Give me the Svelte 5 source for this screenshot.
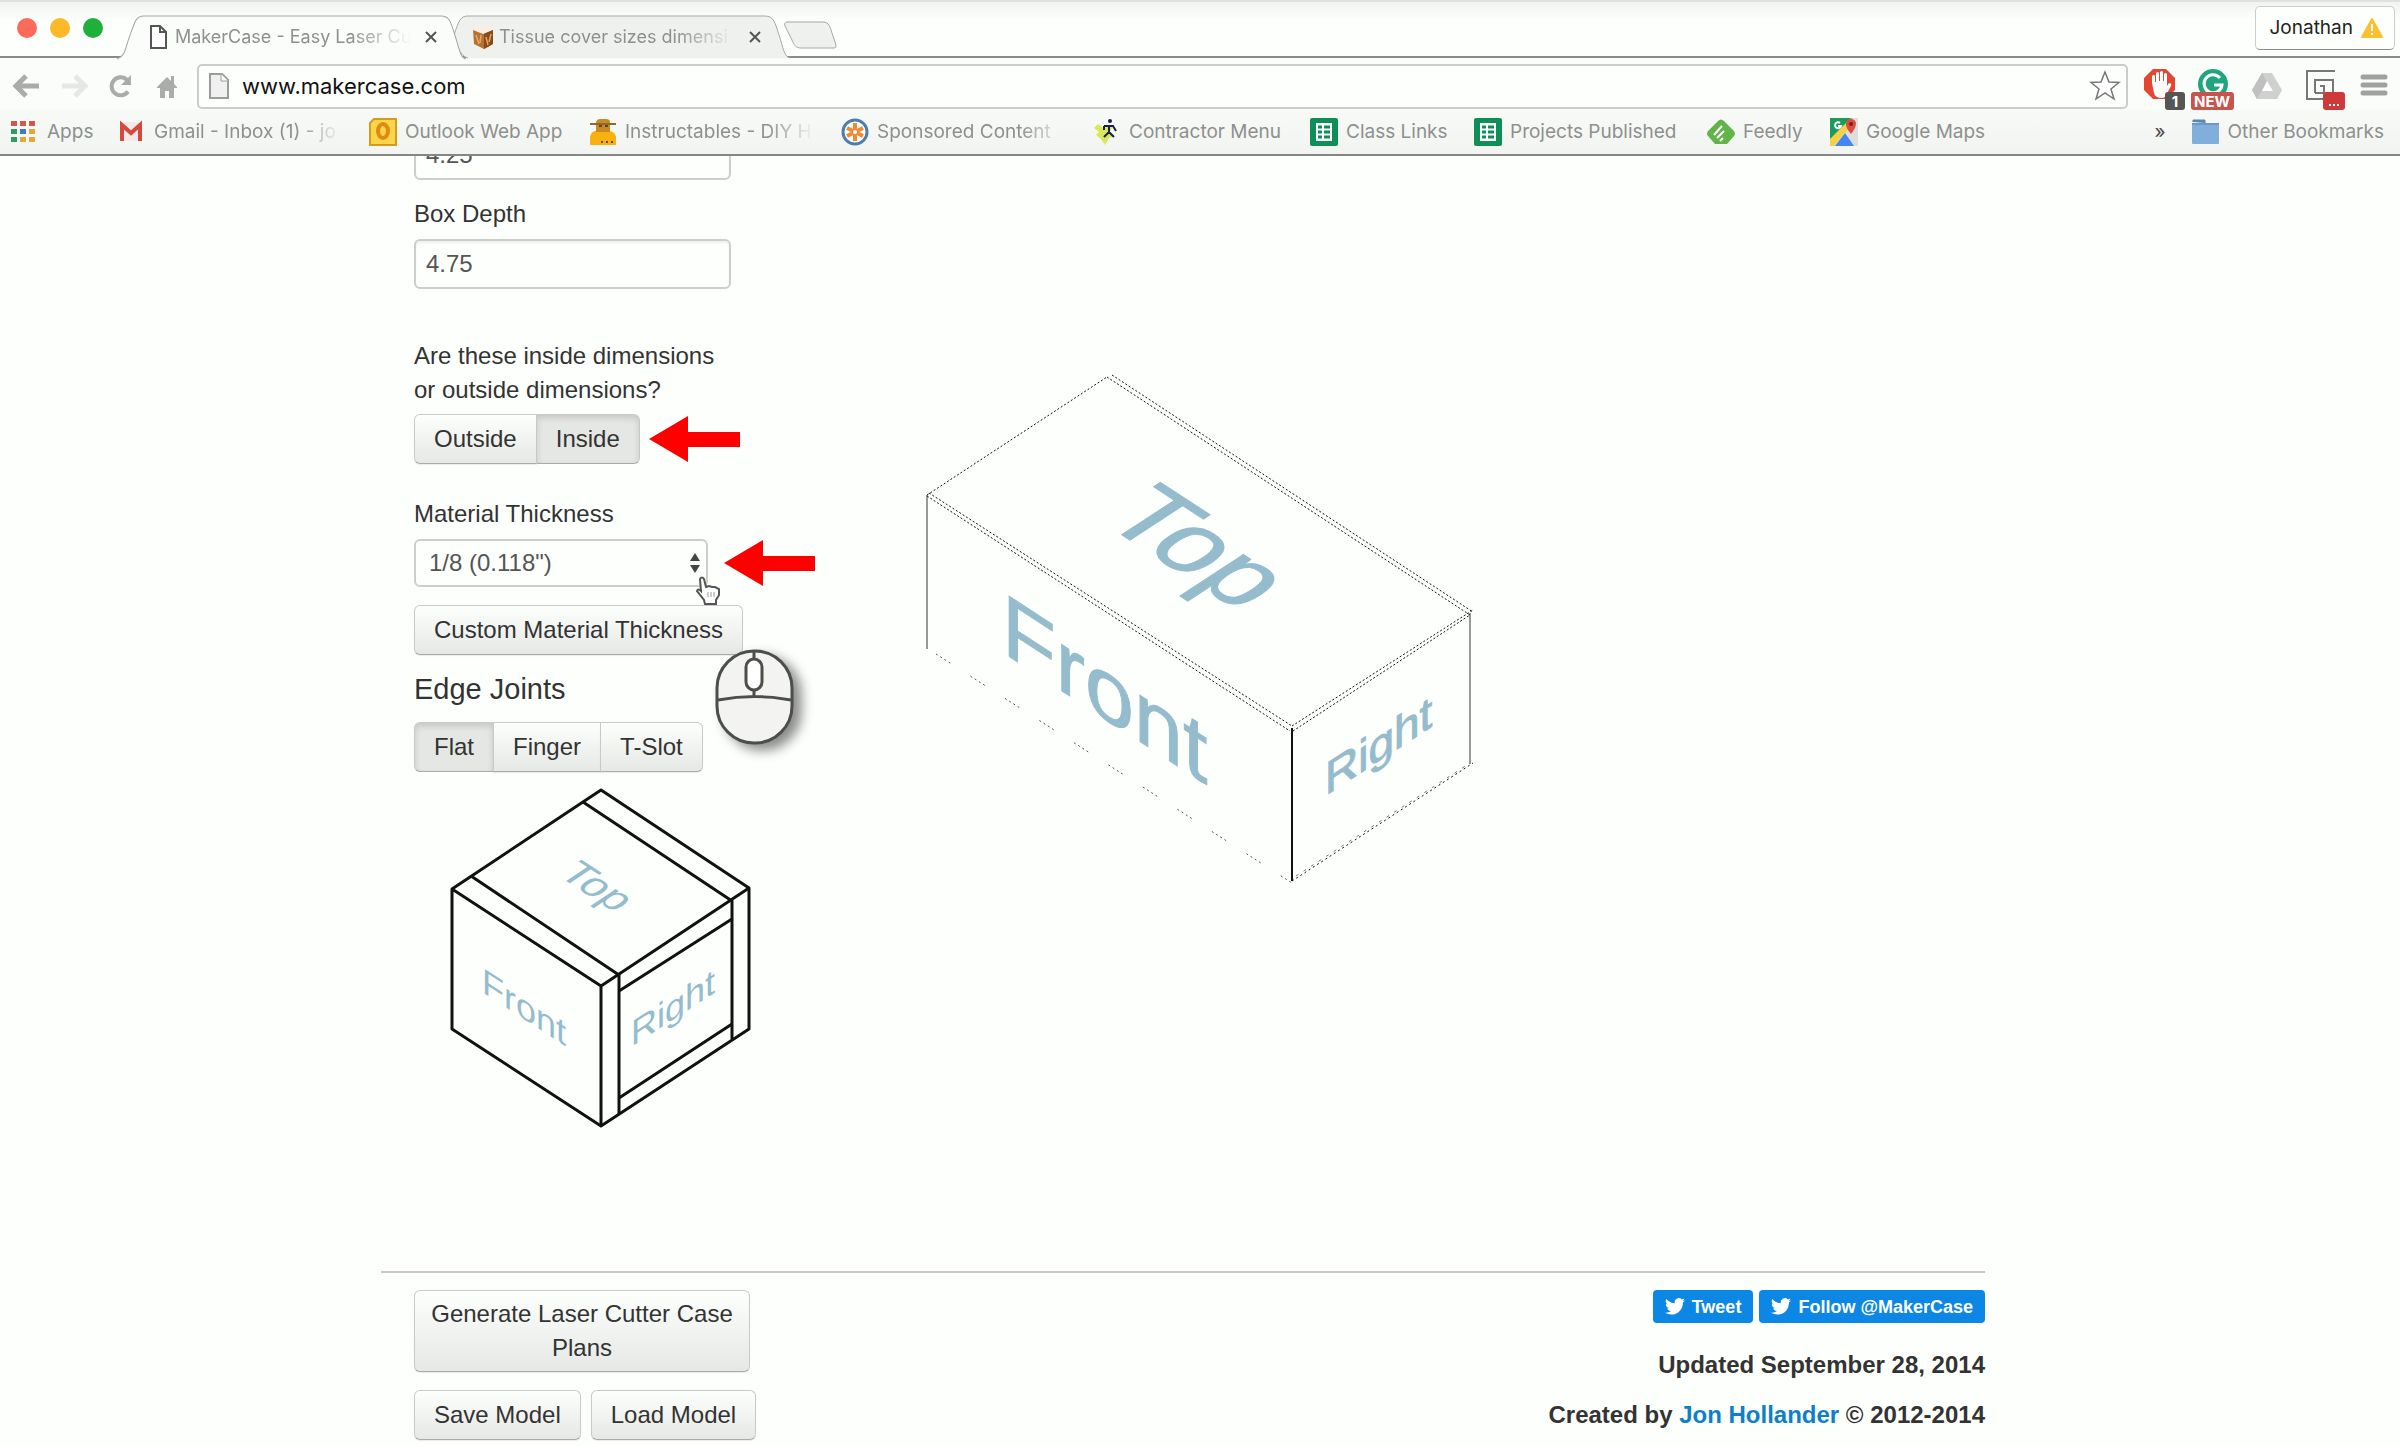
<script lang="ts">
	type Bookmark = { icon: string; label: string; width: number; fade?: boolean };

	const bookmarks: Bookmark[] = [
		{ icon: 'apps', label: 'Apps', width: 45 },
		{ icon: 'gmail', label: 'Gmail - Inbox (1) - jo', width: 189, fade: true },
		{ icon: 'outlook', label: 'Outlook Web App', width: 158 },
		{ icon: 'instructables', label: 'Instructables - DIY H', width: 190, fade: true },
		{ icon: 'sponsored', label: 'Sponsored Content', width: 190, fade: true },
		{ icon: 'contractor', label: 'Contractor Menu', width: 155 },
		{ icon: 'sheet', label: 'Class Links', width: 102 },
		{ icon: 'sheet', label: 'Projects Published', width: 171 },
		{ icon: 'feedly', label: 'Feedly', width: 61 },
		{ icon: 'maps', label: 'Google Maps', width: 120 }
	];

	const appColors = ['#d0574c', '#d0574c', '#d0574c', '#2f9a62', '#3f78c8', '#e2a83a', '#2f9a62', '#e2a83a', '#e2a83a'];
	const thicknesses = ['1/8 (0.118")', '1/4 (0.236")', '3/8 (0.354")'];

	let height = $state('4.25');
	let depth = $state('4.75');
	let side = $state('Inside');
	let joint = $state('Flat');
	let thickness = $state(thicknesses[0]);
</script>

{#snippet bird()}
	<svg class="bird" viewBox="0 0 24 20" aria-hidden="true">
		<path
			fill="#fff"
			d="M24 2.4a9.800 9.800 0 0 1-2.800.8A4.900 4.900 0 0 0 23.300.5a9.900 9.900 0 0 1-3.100 1.200 4.900 4.900 0 0 0-8.400 4.500A14 14 0 0 1 1.700 1a4.900 4.900 0 0 0 1.500 6.600A4.900 4.900 0 0 1 1 7v.1a4.900 4.900 0 0 0 3.900 4.800 5 5 0 0 1-2.200.1 4.900 4.900 0 0 0 4.600 3.400A9.900 9.900 0 0 1 0 17.500 14 14 0 0 0 7.500 19.700c9.100 0 14-7.500 14-14v-.6A10 10 0 0 0 24 2.400z"
		/>
	</svg>
{/snippet}

{#snippet arrow()}
	<svg class="arrow" viewBox="0 0 91 46" aria-hidden="true">
		<path fill="#fe0000" d="M0 23 39 0v16h52v15H39v15z" />
	</svg>
{/snippet}

<div class="window">
	<header>
		<div class="tab-strip">
			<div class="lights">
				<span class="light red"></span>
				<span class="light yellow"></span>
				<span class="light green"></span>
			</div>

			<div class="tab active">
				<svg class="tab-shape" viewBox="0 0 350 43" preserveAspectRatio="none" aria-hidden="true">
					<path d="M0 43C9 40 8 32 13 20 18 6 19 1 27 1H325C334 1 335 8 339 20 343 32 344 42 350 43" />
				</svg>
				<svg class="tab-icon" viewBox="0 0 22 26" aria-hidden="true">
					<path d="M3 2h9l6 6v16H3zM12 2v6h6" fill="#fff" stroke="#555" stroke-width="2" />
				</svg>
				<span class="tab-title fade">MakerCase - Easy Laser Cu</span>
				<button class="close" aria-label="Close MakerCase tab">
					<svg viewBox="0 0 12 12"><path d="M1 1l10 10M11 1 1 11" /></svg>
				</button>
			</div>
			<div class="tab">
				<svg class="tab-shape" viewBox="0 0 350 43" preserveAspectRatio="none" aria-hidden="true">
					<path d="M27 43C18 41 16 28 13 20 18 6 19 1 27 1H325C334 1 335 8 339 20 343 32 344 42 350 43" />
				</svg>
				<svg class="tab-icon" viewBox="0 0 22 26" aria-hidden="true">
					<path d="M1 6l10-3 10 3v14l-9 5-10-5z" fill="#b87130" />
					<path d="M1 6l10 4 10-4-3-4H5z" fill="#f7efe6" />
					<path d="M12 10v15l9-5V6z" fill="#8a4a18" />
					<path d="M4 11l3 9M9 11l-1 8M14 13l2 8M19 10l-2 8" stroke="#e0a866" stroke-width="1.5" />
				</svg>
				<span class="tab-title fade">Tissue cover sizes dimensi</span>
				<button class="close" aria-label="Close Tissue cover tab">
					<svg viewBox="0 0 12 12"><path d="M1 1l10 10M11 1 1 11" /></svg>
				</button>
			</div>
			<button class="new-tab" aria-label="New tab">
				<svg viewBox="0 0 54 28">
					<path d="M5 1H40C46 1 47 6 49 12l4 12c0 2 0 3-2 3H18c-5 0-7-3-9-8L2 5c-1-3 0-4 3-4z" />
				</svg>
			</button>

			<button class="profile">
				Jonathan
				<svg viewBox="0 0 22 20" aria-hidden="true">
					<path d="M11 1 21 19H1z" fill="#fbc02d" stroke="#fbc02d" stroke-linejoin="round" stroke-width="2" />
					<path d="M11 6v7M11 15v2" stroke="#fff" stroke-width="2" />
				</svg>
			</button>
		</div>

		<div class="toolbar">
			<nav class="nav" aria-label="History">
				<button aria-label="Back">
					<svg viewBox="0 0 28 26"><path d="M13 3 3 13l10 10M3 13h23" fill="none" stroke="#aaacaa" stroke-width="5" /></svg>
				</button>
				<button aria-label="Forward">
					<svg viewBox="0 0 28 26"><path d="M15 3l10 10-10 10M25 13H2" fill="none" stroke="#e6e8e5" stroke-width="5" /></svg>
				</button>
				<button aria-label="Reload">
					<svg viewBox="0 0 28 26">
						<path d="M21 18.500A9 9 0 1 1 20 7" fill="none" stroke="#aaacaa" stroke-width="4" />
						<path d="M24 2v10H14z" fill="#aaacaa" />
					</svg>
				</button>
				<button aria-label="Home">
					<svg viewBox="0 0 28 26"><path d="M3 14 13 4l4 4V3h3v8l3 3v1h-3v10h-5v-7h-4v7H6V15H3z" fill="#aaacaa" /></svg>
				</button>
			</nav>

			<div class="address">
				<svg class="page-icon" viewBox="0 0 22 28" aria-hidden="true">
					<path d="M2 2h12l6 6v18H2z" fill="#f0f0f0" stroke="#9a9c9a" stroke-width="2" />
					<path d="M13 2v7h7" fill="#fff" stroke="#9a9c9a" />
				</svg>
				<input aria-label="Address" value="www.makercase.com" />
				<button class="star" aria-label="Bookmark this page">
					<svg viewBox="0 0 32 32">
						<path d="M16 2l4 10 10 .5-8 6.500 3 10-9-6-9 6 3-10-8-6.500L12 12z" fill="#fff" stroke="#777" stroke-width="1.500" />
					</svg>
				</button>
			</div>

			<div class="extensions">
				<button aria-label="Ad blocker, 1 blocked">
					<svg viewBox="0 0 54 44">
						<path d="M13 5h13l9 9v12l-9 9H13l-9-9V14z" fill="#e4472f" />
						<path
							d="M12 19v-7q2-2 3 0v6h1V9q2-2 3 0v8h1V8q2-2 3 0v9h1v-7q2-2 3 0v12l2-3q3 0 2 3l-5 9q-1 3-4 3-7 0-8-5z"
							fill="#fff"
						/>
						<rect x="25" y="28" width="20" height="18" rx="3" fill="#555" />
						<text x="35" y="43" class="badge">1</text>
					</svg>
				</button>
				<button aria-label="Grammar checker, new">
					<svg viewBox="0 0 54 44">
						<circle cx="19" cy="20" r="15" fill="#1fa67f" />
						<path d="M26 14A9 9 0 1 0 28 21h-8" fill="none" stroke="#fff" stroke-width="3" />
						<rect x="-3" y="28" width="43" height="18" rx="3" fill="#c5564e" />
						<text x="18" y="43" class="badge">NEW</text>
					</svg>
				</button>
				<button aria-label="Drive">
					<svg viewBox="0 0 54 44">
						<path d="M14 9h10l10 17-5 9H9l-5-9z" fill="#cfd0cf" />
						<path d="M14 9 4 26l5 9 10-17z" fill="#bfc0bf" />
						<path d="M19 17l6 10H14z" fill="#fff" />
					</svg>
				</button>
				<button aria-label="Screen capture">
					<svg viewBox="0 0 54 44">
						<path d="M33 7H5v28h18M13 29V16h18v16M13 29h9v-7h-4" fill="none" stroke="#777" stroke-width="2" />
						<rect x="21" y="28" width="22" height="18" rx="3" fill="#ce3a3c" />
						<path d="M27 41h2M31 41h2M35 41h2" stroke="#fff" stroke-width="2" />
					</svg>
				</button>
				<button class="menu" aria-label="Menu">
					<svg viewBox="0 0 36 44"><path d="M7 13h22M7 21h22M7 29h22" stroke="#a0a2a0" stroke-width="5" stroke-linecap="round" /></svg>
				</button>
			</div>
		</div>

		<nav class="bookmarks" aria-label="Bookmarks">
			{#each bookmarks as b (b.label)}
				<a href="#top" class="bookmark">
					<svg viewBox="0 0 28 28" aria-hidden="true">
						{#if b.icon === 'apps'}
							{#each appColors as color, i}
								<rect x={(i % 3) * 9} y={3 + Math.floor(i / 3) * 8} width="6" height="5" fill={color} />
							{/each}
						{:else if b.icon === 'gmail'}
							<rect x="2" y="4" width="22" height="19" fill="#f3e9e7" />
							<path d="M4 23V7l9 8 9-8v16" fill="none" stroke="#d6493d" stroke-width="4" />
						{:else if b.icon === 'outlook'}
							<path d="M5 1h22v26H1V5z" fill="#fbd64b" stroke="#d59b1d" stroke-width="2" />
							<ellipse cx="14" cy="13" rx="5" ry="7" fill="none" stroke="#e08a14" stroke-width="4" />
						{:else if b.icon === 'instructables'}
							<path d="M1 27V19q1-5 5-6h15q5 1 6 6v8z" fill="#f7b20f" />
							<path d="M7 4q1-3 4-3h6q4 0 4 3v10H7z" fill="#c98a1f" />
							<path d="M1 6h26" stroke="#8a6a3a" stroke-width="2" />
							<path d="M10 8h3M16 8h3M12 24h2M17 24h2M22 24h2" stroke="#6b4310" stroke-width="2" />
						{:else if b.icon === 'sponsored'}
							<circle cx="14" cy="14" r="12" fill="#fff" stroke="#4c7eae" stroke-width="3" />
							<path d="M14 5v18M6 10l16 8M22 10 6 18" stroke="#f18a35" stroke-width="4" />
							<circle cx="14" cy="14" r="2" fill="#fff" />
						{:else if b.icon === 'contractor'}
							<path d="M5 6l5 4 10-3-3 7 4 4-5 2-4 7-4-6-5-4 3-3-5-4z" fill="#d9e85a" />
							<circle cx="17" cy="3" r="2" fill="#1c1f4d" />
							<path d="M11 8h9l3 5M16 7v7l5 5M16 14l-5 5M11 8v4" fill="none" stroke="#1c1f4d" stroke-width="2" />
						{:else if b.icon === 'sheet'}
							<rect width="28" height="28" rx="2" fill="#0e8f57" />
							<path d="M6 5h16v18H6z" fill="#fff" />
							<path d="M8 9h4M8 14h4M8 19h4M14 9h6M14 14h6M14 19h6" stroke="#0e8f57" stroke-width="3" />
						{:else if b.icon === 'feedly'}
							<path d="M11 3q3-3 6 0l10 10q2 3 0 5l-7 8H8l-7-8q-2-2 0-5z" fill="#61b548" />
							<path d="M7 17l8-9M10 20l7-7M13 23l3-3" stroke="#fff" stroke-width="2" />
						{:else}
							<rect width="28" height="28" fill="#ddd" />
							<path d="M0 0h22L0 24z" fill="#1d9a5b" />
							<path d="M5 28 15 15l9 13z" fill="#4285f4" />
							<path d="M0 21 21 0v8L4 28H0z" fill="#f7d04a" />
							<path d="M21 16q-6-7-5-11 1-4 5-4t5 4q0 5-5 11z" fill="#dd4b3e" />
							<circle cx="21" cy="6" r="2" fill="#7b1f18" />
							<path d="M10 5a3 3 0 1 0 1 3H8" fill="none" stroke="#fff" stroke-width="2" />
						{/if}
					</svg>
					<span class:fade={b.fade} style:width="{b.width}px">{b.label}</span>
				</a>
			{/each}
			<button class="more" aria-label="More bookmarks">»</button>
			<a href="#top" class="bookmark">
				<svg viewBox="0 0 28 28" aria-hidden="true">
					<path d="M1 4V2h12v3" fill="#5886b8" stroke="#5886b8" />
					<rect y="5" width="27" height="21" rx="1" fill="#82aedb" />
					<path d="M0 6h27" stroke="#6b98c8" stroke-width="2" />
				</svg>
				<span>Other Bookmarks</span>
			</a>
		</nav>
	</header>

	<main>
		<div class="content">
			<div class="editor">
				<form>
					<input id="height" class="field" aria-label="Box Height" bind:value={height} />
					<label for="depth">Box Depth</label>
					<input id="depth" class="field" bind:value={depth} />

					<p class="question">Are these inside dimensions<br />or outside dimensions?</p>
					<div class="row">
						<div class="group">
							{#each ['Outside', 'Inside'] as name}
								<button type="button" class="btn" class:pressed={side === name} onclick={() => (side = name)}>{name}</button>
							{/each}
						</div>
						{@render arrow()}
					</div>

					<label class="thickness-label" for="thickness">Material Thickness</label>
					<div class="row wide">
						<div class="select">
							<select id="thickness" bind:value={thickness}>
								{#each thicknesses as t}
									<option value={t}>{t}</option>
								{/each}
							</select>
							<svg class="stepper" viewBox="0 0 12 20" aria-hidden="true">
								<path d="M6 0l5 8H1zM6 20l5-8H1z" fill="#444" />
							</svg>
							<svg class="hand" viewBox="0 0 26 30" aria-hidden="true">
								<path
									d="M5 3q2-3 4 0l2 8 3-1 3 1 3 0 4 2v6l-3 5v4H10l-1-4-7-9q1-3 4 0z"
									fill="#fff"
									stroke="#555"
									stroke-width="2"
								/>
								<path d="M13 16v5M16 16v5M19 16v5" stroke="#999" />
							</svg>
						</div>
						{@render arrow()}
					</div>
					<div class="custom">
						<button type="button" class="btn">Custom Material Thickness</button>
						<svg class="mouse" viewBox="0 0 100 120" aria-hidden="true">
							<rect x="8" y="9" width="75" height="92" rx="37" fill="#f3f4f2" stroke="#4c4e4c" stroke-width="3" />
							<path d="M9 58q37-7 73 0M45 9v8M45 48v7" fill="none" stroke="#4c4e4c" stroke-width="3" />
							<rect x="37" y="17" width="16" height="31" rx="8" fill="#fff" stroke="#4c4e4c" stroke-width="3" />
						</svg>
					</div>

					<h2>Edge Joints</h2>
					<div class="group">
						{#each ['Flat', 'Finger', 'T-Slot'] as name}
							<button type="button" class="btn" class:pressed={joint === name} onclick={() => (joint = name)}>{name}</button>
						{/each}
					</div>

					<svg class="joint" viewBox="0 10 360 370" role="img" aria-label="Flat joint box">
						<g fill="none" stroke="#111" stroke-width="3" stroke-linejoin="round">
							<path d="M181 22 32 121V261L181 358 329 261V120z" />
							<path d="M32 121 181 218 329 120M181 218V358" />
							<path d="M163 34 312 133V271M51 108 199 207V346" />
							<path d="M199 223 312 151M199 330 312 256" />
						</g>
						<g class="face" font-size="36">
							<text transform="matrix(1 0.65 0 1 62 224)">Front</text>
							<text transform="matrix(1 0.65 -0.95 0.64 137 107)">Top</text>
							<text transform="matrix(1 -0.65 0 1 211 279)">Right</text>
						</g>
					</svg>
				</form>

				<svg class="preview" viewBox="0 0 600 560" role="img" aria-label="Box preview">
					<g fill="none" stroke="#111">
						<g stroke-dasharray="2 2">
							<path d="M27 145 207 27" />
							<path d="M207 27 570 265M212 25 573 262" />
							<path d="M27 146 390 381M29 143 392 376" />
							<path d="M392 376 573 260M393 381 570 265" />
							<path d="M392 531 573 413" stroke-dasharray="2 3" />
							<path d="M396 526 570 413" stroke-dasharray="3 6" stroke="#777" />
						</g>
						<path d="M36 304 392 533" stroke-dasharray="2 3 2 3 2 3 2 24" stroke="#555" />
						<path d="M27 145V299M570 263V414" stroke="#333" />
						<path d="M392 378V531" stroke="#111" stroke-width="2" />
					</g>
					<g class="face bold">
						<text font-size="88" transform="matrix(1 0.65 0 1 102 302)">Front</text>
						<text font-size="88" transform="matrix(1 0.65 -0.98 0.64 199 170)">Top</text>
						<text font-size="46" transform="matrix(1 -0.65 0 1 425 446)">Right</text>
					</g>
				</svg>
			</div>

			<footer>
				<div class="actions">
					<button class="btn generate">Generate Laser Cutter Case Plans</button>
					<div class="models">
						<button class="btn">Save Model</button>
						<button class="btn">Load Model</button>
					</div>
				</div>
				<div class="credits">
					<div class="social">
						<a class="tweet" href="#tweet">{@render bird()}Tweet</a>
						<a class="tweet" href="#follow">{@render bird()}Follow @MakerCase</a>
					</div>
					<p>Updated September 28, 2014</p>
					<p>Created by <a href="#author">Jon Hollander</a> © 2012-2014</p>
				</div>
			</footer>
		</div>
	</main>
</div>

<style>
	:global(body) {
		background: #fdfffc;
	}

	.window {
		height: 100vh;
		display: flex;
		flex-direction: column;
		overflow: hidden;
		box-sizing: border-box;
		color: #333;
		font-family: 'Liberation Sans', Arial, sans-serif;
		font-size: 24px;
		line-height: 34px;
	}

	button,
	input,
	select {
		font: inherit;
		color: inherit;
		margin: 0;
	}

	header button {
		border: 0;
		padding: 0;
		background: none;
	}

	header {
		font-family: Inter, sans-serif;
		border-bottom: 2px solid #858785;
		background: #f8faf7;
	}

	svg {
		display: block;
		flex: none;
		overflow: visible;
	}

	.tab-strip {
		display: flex;
		height: 58px;
		box-sizing: border-box;
		border-top: 2px solid #dfe1de;
		border-bottom: 2px solid #8a8c8a;
		background: linear-gradient(#f1f3f0, #fdfffc 18px);
	}

	.lights {
		display: flex;
		gap: 13px;
		width: 100px;
		padding: 16px 0 0 17px;
	}

	.light {
		width: 20px;
		height: 20px;
		border-radius: 50%;
	}

	.red {
		background: #fc6a59;
	}

	.yellow {
		background: #fdb827;
	}

	.green {
		background: #1fb03c;
	}

	.tab {
		position: relative;
		display: flex;
		align-items: center;
		width: 349px;
		height: 43px;
		margin: 13px -25px 0 0;
		padding: 0 29px 0 31px;
		box-sizing: border-box;
		color: #8e908e;
		font-size: 18px;
	}

	.tab.active {
		z-index: 1;
		height: 44px;
	}

	.tab-shape {
		position: absolute;
		inset: 0;
		width: 100%;
		height: 100%;
		fill: #eff1ee;
		stroke: #a5a7a5;
	}

	.active .tab-shape {
		fill: #fbfdfa;
	}

	.tab-icon {
		position: relative;
		width: 22px;
		height: 26px;
	}

	.tab-title {
		position: relative;
		flex: 1;
		margin: 0 14px 0 5px;
		white-space: nowrap;
	}

	.fade {
		mask-image: linear-gradient(90deg, #000 75%, transparent);
	}

	.close {
		position: relative;
	}

	.close svg {
		width: 12px;
		height: 12px;
		stroke: #555;
		stroke-width: 2;
	}

	header .new-tab {
		align-self: flex-start;
		height: 28px;
		margin: 9px 0 0 18px;
		padding-top: 10px;
	}

	.new-tab svg {
		width: 54px;
		height: 28px;
		fill: #eff1ee;
		stroke: #a5a7a5;
	}

	header .profile {
		display: flex;
		align-items: center;
		gap: 8px;
		height: 44px;
		margin: 4px 5px 0 auto;
		padding: 0 11px 0 14px;
		border: 1px solid #ccc;
		border-bottom-color: #8a8c8a;
		border-radius: 5px;
		background: #fdfffc;
		color: #222;
		font-size: 19px;
	}

	.profile svg {
		width: 22px;
		height: 20px;
	}

	.toolbar {
		display: flex;
		align-items: center;
		box-sizing: border-box;
		height: 52px;
		padding-top: 4px;
		background: #fbfdfa;
	}

	.nav {
		display: flex;
		gap: 19px;
		padding: 0 15px 0 13px;
	}

	.nav svg {
		width: 28px;
		height: 26px;
	}

	.address {
		display: flex;
		flex: 1;
		align-items: center;
		height: 45px;
		box-sizing: border-box;
		padding: 0 5px 0 9px;
		border: 2px solid #cbcdca;
		border-radius: 5px;
		background: #fdfffc;
	}

	.page-icon {
		width: 22px;
		height: 28px;
	}

	.address input {
		flex: 1;
		padding: 0 0 0 12px;
		border: 0;
		outline: 0;
		background: none;
		color: #111;
		font-size: 22px;
	}

	.star svg {
		width: 32px;
		height: 32px;
	}

	.extensions {
		display: flex;
		padding: 0 8px 0 12px;
	}

	.extensions svg {
		width: 54px;
		height: 44px;
	}

	.extensions .menu svg {
		width: 36px;
	}

	.badge {
		fill: #fff;
		font-size: 15px;
		font-weight: 700;
		text-anchor: middle;
	}

	.bookmarks {
		display: flex;
		align-items: center;
		gap: 26px;
		height: 44px;
		padding: 0 16px 0 11px;
		background: linear-gradient(#f8faf7, #f2f4f1);
		font-size: 19px;
	}

	.bookmark {
		display: flex;
		align-items: center;
		gap: 8px;
		color: #8e908e;
		text-decoration: none;
		white-space: nowrap;
	}

	.bookmark svg {
		width: 28px;
		height: 28px;
	}

	.more {
		margin-left: auto;
		color: #444;
	}

	main {
		flex: 1;
		overflow: hidden;
	}

	/* The page is scrolled down a little, so the first field is cut. */
	.content {
		margin: -26px 415px 0 381px;
	}

	.editor {
		display: flex;
		height: 1141px;
		padding-left: 33px;
	}

	form {
		flex: none;
		width: 486px;
	}

	label {
		display: block;
		margin: 17px 0 8px;
	}

	.field,
	select {
		display: block;
		width: 317px;
		height: 50px;
		box-sizing: border-box;
		padding: 0 10px;
		border: 2px solid #ccceca;
		border-radius: 6px;
		background: #fdfffc;
		color: #555;
		box-shadow: inset 0 2px 2px rgba(0, 0, 0, 0.06);
	}

	.question {
		margin: 50px 0 7px;
	}

	.row {
		display: flex;
		align-items: center;
		gap: 9px;
	}

	.row.wide {
		gap: 16px;
	}

	.arrow {
		width: 91px;
		height: 46px;
	}

	.group {
		display: flex;
	}

	.btn {
		min-height: 50px;
		padding: 6px 19px;
		border: 1px solid #c8cac7;
		border-bottom-color: #a9aba8;
		border-radius: 6px;
		background: linear-gradient(#fdfffc, #e6e8e5);
		box-shadow: 0 1px 1px rgba(0, 0, 0, 0.08);
	}

	.group .btn + .btn {
		margin-left: -1px;
	}

	.group .btn:not(:first-child) {
		border-top-left-radius: 0;
		border-bottom-left-radius: 0;
	}

	.group .btn:not(:last-child) {
		border-top-right-radius: 0;
		border-bottom-right-radius: 0;
	}

	.btn.pressed {
		background: #e5e7e4;
		box-shadow: inset 0 3px 6px rgba(0, 0, 0, 0.14);
	}

	.thickness-label {
		margin: 33px 0 8px;
	}

	.select,
	.custom {
		position: relative;
	}

	select {
		appearance: none;
		width: 294px;
		height: 48px;
		padding-left: 13px;
		box-shadow: none;
	}

	.stepper {
		position: absolute;
		right: 7px;
		top: 14px;
		width: 12px;
		height: 20px;
	}

	.hand {
		position: absolute;
		z-index: 1;
		left: 281px;
		top: 37px;
		width: 26px;
		height: 30px;
	}

	.custom {
		width: fit-content;
		margin-top: 18px;
	}

	.mouse {
		position: absolute;
		left: 295px;
		top: 37px;
		width: 100px;
		height: 120px;
		filter: drop-shadow(8px 6px 6px rgba(0, 0, 0, 0.45));
	}

	h2 {
		margin: 17px 0 16px;
		font-size: 29px;
		font-weight: 400;
		line-height: 34px;
	}

	.joint {
		width: 360px;
		height: 370px;
		margin: 6px 0 0 6px;
	}

	.face {
		fill: #95bccc;
	}

	.face.bold {
		stroke: #95bccc;
		stroke-width: 1;
	}

	.preview {
		width: 600px;
		height: 560px;
		margin-top: 220px;
	}

	footer {
		display: flex;
		justify-content: space-between;
		padding: 17px 0 0 33px;
		border-top: 2px solid #c6c8c5;
	}

	.generate {
		width: 336px;
		height: 82px;
		padding: 6px 12px;
	}

	.models {
		display: flex;
		gap: 10px;
		margin-top: 18px;
	}

	.credits {
		font-weight: 700;
		text-align: right;
	}

	.credits p {
		margin: 0 0 16px;
	}

	.credits a {
		color: #0f7fc9;
		text-decoration: none;
	}

	.social {
		display: flex;
		justify-content: flex-end;
		gap: 6px;
		margin-bottom: 25px;
	}

	.credits .tweet {
		display: flex;
		align-items: center;
		gap: 7px;
		height: 33px;
		padding: 0 12px;
		border-radius: 4px;
		background: #0d87e5;
		color: #fff;
		font-size: 18px;
	}

	.bird {
		width: 20px;
		height: 17px;
	}
</style>
